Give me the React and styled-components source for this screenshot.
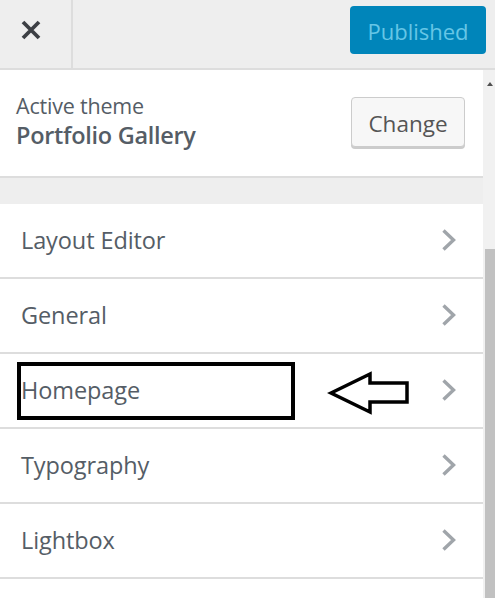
import React from "react";
import styled, { createGlobalStyle } from "styled-components";

const Global = createGlobalStyle`
  html, body { margin: 0; padding: 0; background: #fff; }
  body { width: 495px; height: 598px; overflow: hidden; font-family: "Open Sans", "Noto Sans", sans-serif; }
  * { box-sizing: border-box; }
`;

const Frame = styled.div`
  width: 495px;
  height: 598px;
  display: flex;
  flex-direction: column;
  background: #fff;
`;

const Header = styled.header`
  height: 70px;
  flex: none;
  display: flex;
  align-items: stretch;
  background: #eeeeee;
  border-bottom: 2px solid #dddddd;
`;

const CloseButton = styled.button`
  width: 73px;
  border: 0;
  border-right: 2px solid #dddddd;
  background: transparent;
  display: flex;
  align-items: center;
  justify-content: center;
  padding: 0 10px 8px 0;
  color: #3c3f44;
`;

const HeaderSpacer = styled.div`
  flex: 1;
`;

const PublishButton = styled.button`
  align-self: flex-start;
  margin: 6px 9px 0 0;
  width: 136px;
  height: 48px;
  border: 0;
  border-radius: 4px;
  background: #0085ba;
  color: #66c6e6;
  font-family: "Open Sans", "Noto Sans", sans-serif;
  font-size: 22px;
  padding: 2px 0 0 0;
`;

const Body = styled.div`
  flex: 1;
  display: flex;
  min-height: 0;
`;

const Panel = styled.div`
  flex: 1;
  display: flex;
  flex-direction: column;
  background: #fff;
`;

const ThemeSection = styled.section`
  height: 108px;
  flex: none;
  display: flex;
  align-items: center;
  justify-content: space-between;
  padding: 0 18px 4px 16px;
  border-bottom: 2px solid #dddddd;
`;

const ThemeInfo = styled.div`
  display: flex;
  flex-direction: column;
  color: #555d66;
`;

const ThemeLabel = styled.span`
  font-size: 21.5px;
  line-height: 29px;
  letter-spacing: -0.2px;
`;

const ThemeName = styled.span`
  font-size: 23.5px;
  font-weight: 600;
  line-height: 31px;
  letter-spacing: -0.3px;
`;

const ChangeButton = styled.button`
  width: 114px;
  height: 50px;
  margin-top: 2px;
  border: 1px solid #cccccc;
  border-radius: 4px;
  background: #f7f7f7;
  box-shadow: 0 2px 0 #cccccc;
  color: #555555;
  font-family: "Open Sans", "Noto Sans", sans-serif;
  font-size: 22.5px;
  padding: 2px 0 0 0;
`;

const Band = styled.div`
  height: 26px;
  flex: none;
  background: #eeeeee;
`;

const SectionList = styled.ul`
  list-style: none;
  margin: 0;
  padding: 0;
`;

const SectionRow = styled.li`
  position: relative;
  height: 75px;
  display: flex;
  align-items: center;
  justify-content: space-between;
  padding: 0 26px 2px 21px;
  border-bottom: 2px solid #dddddd;
  color: #555d66;
  font-size: 23.5px;
  letter-spacing: -0.1px;
`;

const Chevron = styled.svg`
  width: 16px;
  height: 24px;
  margin-top: 0;
`;

const HighlightBox = styled.div`
  position: absolute;
  left: 17px;
  top: 8px;
  width: 278px;
  height: 58px;
  border: 4px solid #000;
  pointer-events: none;
`;

const PointerArrow = styled.svg`
  position: absolute;
  left: 326px;
  top: 16px;
  width: 86px;
  height: 46px;
  pointer-events: none;
`;

const Scrollbar = styled.div`
  width: 12px;
  flex: none;
  display: flex;
  flex-direction: column;
  align-items: flex-end;
  background: #f1f1f1;
  padding-top: 12px;
`;

const ScrollArrow = styled.div`
  width: 0;
  height: 0;
  margin-right: 2px;
  border-left: 3px solid transparent;
  border-right: 3px solid transparent;
  border-bottom: 4px solid #505050;
`;

const ScrollThumb = styled.div`
  width: 10px;
  flex: 1;
  margin-top: 163px;
  background: #c1c1c1;
`;

const sections = ["Layout Editor", "General", "Homepage", "Typography", "Lightbox"];

export default function App() {
  return (
    <>
      <Global />
      <Frame>
        <Header>
          <CloseButton aria-label="Close">
            <svg width="20" height="20" viewBox="0 0 20 20">
              <path d="M2 2 L18 18 M18 2 L2 18" stroke="currentColor" strokeWidth="3.8" strokeLinecap="butt" />
            </svg>
          </CloseButton>
          <HeaderSpacer />
          <PublishButton>Published</PublishButton>
        </Header>
        <Body>
          <Panel>
            <ThemeSection>
              <ThemeInfo>
                <ThemeLabel>Active theme</ThemeLabel>
                <ThemeName>Portfolio Gallery</ThemeName>
              </ThemeInfo>
              <ChangeButton>Change</ChangeButton>
            </ThemeSection>
            <Band />
            <SectionList>
              {sections.map((s) => (
                <SectionRow key={s}>
                  <span>{s}</span>
                  <Chevron viewBox="0 0 16 24">
                    <path d="M2.5 2.5 L12.5 12 L2.5 21.5" fill="none" stroke="#a0a5aa" strokeWidth="3.4" />
                  </Chevron>
                  {s === "Homepage" && (
                    <>
                      <HighlightBox />
                      <PointerArrow viewBox="0 0 86 46">
                        <path
                          d="M5 23 L44 4 L44 13 L81 13 L81 32 L44 32 L44 42 Z"
                          fill="#fff"
                          stroke="#000"
                          strokeWidth="3.5"
                          strokeLinejoin="miter"
                        />
                      </PointerArrow>
                    </>
                  )}
                </SectionRow>
              ))}
            </SectionList>
          </Panel>
          <Scrollbar>
            <ScrollArrow />
            <ScrollThumb />
          </Scrollbar>
        </Body>
      </Frame>
    </>
  );
}
